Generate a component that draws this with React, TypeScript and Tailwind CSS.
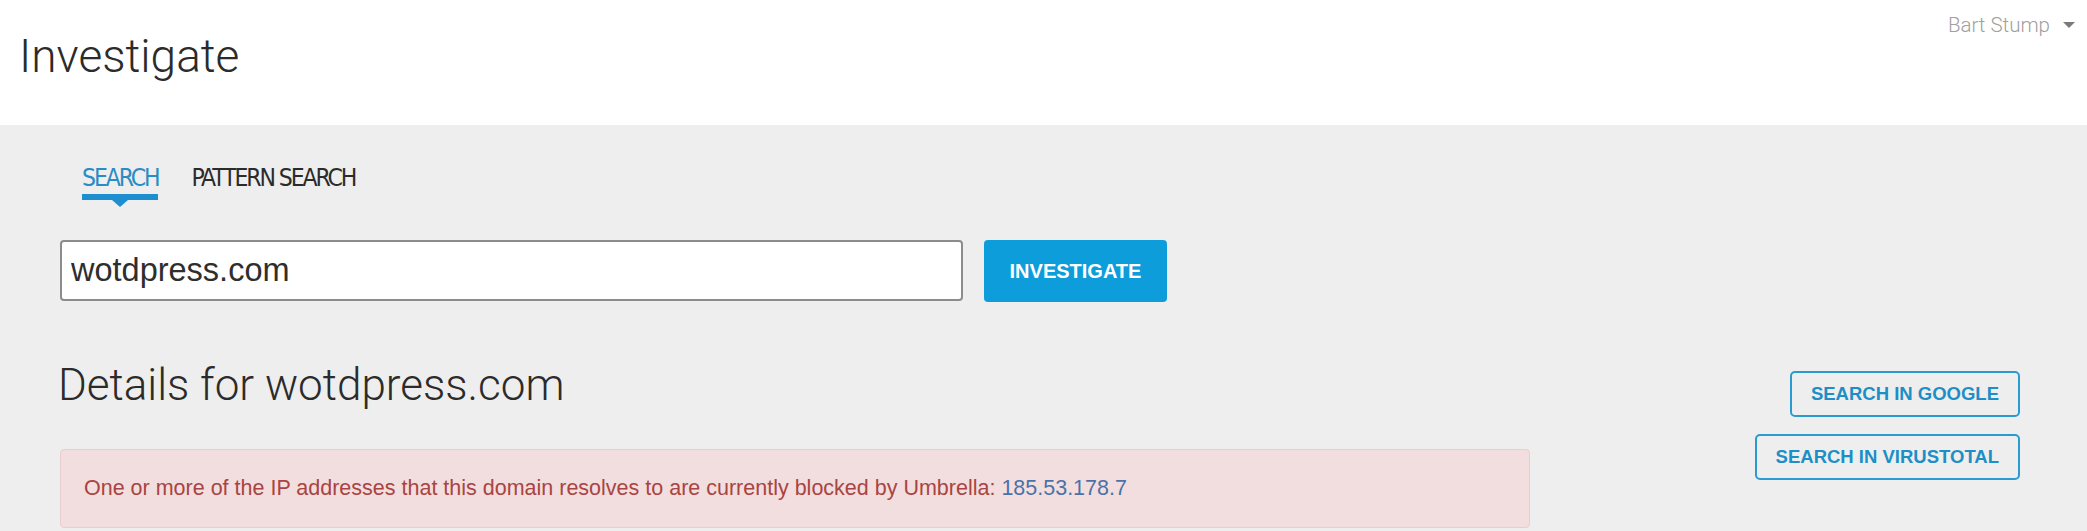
import { useState } from "react";

const tabs = ["SEARCH", "PATTERN SEARCH"];

function Tabs() {
  const [active, setActive] = useState(0);
  return (
    <div className="flex gap-[33px] pl-[22px] pt-[41px]">
      {tabs.map((tab, i) => (
        <button
          key={tab}
          onClick={() => setActive(i)}
          className={`relative pb-[9px] text-[24.5px] leading-none tracking-[-2.1px] font-['Liberation_Sans_Narrow','DejaVu_Sans_Condensed',sans-serif] ${
            i === active ? "text-[#2a8cc4]" : "text-[#2b2b2b]"
          }`}
        >
          {tab}
          {i === active && (
            <>
              <span className="absolute left-0 right-0 bottom-0 h-[6px] bg-[#1e8ed0]" />
              <span className="absolute left-1/2 -bottom-[7px] -translate-x-1/2 w-0 h-0 border-l-[8px] border-r-[8px] border-t-[7px] border-l-transparent border-r-transparent border-t-[#1e8ed0]" />
            </>
          )}
        </button>
      ))}
    </div>
  );
}

function OutlineButton({ label }: { label: string }) {
  return (
    <button className="h-[46px] px-[19px] rounded-[5px] border-2 border-[#2a9bd0] text-[#1d8fc6] text-[18.5px] font-bold font-['Liberation_Sans',Arial,sans-serif]">
      {label}
    </button>
  );
}

export default function App() {
  return (
    <div className="min-h-screen bg-[#eeeeee] font-['Roboto','Liberation_Sans',sans-serif]">
      <header className="h-[125px] bg-white flex justify-between items-start pl-[19px] pr-[12px]">
        <h1 className="pt-[33px] text-[46px] leading-none font-light text-[#2b2b2b]">Investigate</h1>
        <div className="pt-[15px] flex items-center gap-[13px] text-[20.5px] leading-none font-light text-[#a0a0a0]">
          <span>Bart Stump</span>
          <span className="w-0 h-0 border-l-[6px] border-r-[6px] border-t-[6px] border-l-transparent border-r-transparent border-t-[#7a7a7a]" />
        </div>
      </header>

      <main className="pl-[60px] pr-[67px]">
        <Tabs />

        <div className="flex gap-[21px] mt-[40px]">
          <input
            defaultValue="wotdpress.com"
            className="w-[903px] h-[61px] px-[9px] bg-white border-2 border-[#8c8c8c] rounded-[4px] text-[32.5px] text-[#2e2e2e] font-['Liberation_Sans',Arial,sans-serif] outline-none"
          />
          <button className="w-[183px] h-[62px] rounded-[4px] bg-[#0d9ddb] text-white text-[20px] font-bold font-['Liberation_Sans',Arial,sans-serif]">
            INVESTIGATE
          </button>
        </div>

        <div className="flex justify-between mt-[61px]">
          <div className="w-[1470px]">
            <h2 className="text-[44px] leading-none font-light text-[#2b2b2b] -ml-[2px]">Details for wotdpress.com</h2>
            <div className="mt-[42px] h-[79px] flex items-center px-[23px] bg-[#f2dede] border border-[#ebccd1] rounded-[4px] text-[21.5px] text-[#a94442] font-['Liberation_Sans',Arial,sans-serif]">
              <span>
                One or more of the IP addresses that this domain resolves to are currently blocked by Umbrella:{" "}
                <a className="text-[#4a72a8]">185.53.178.7</a>
              </span>
            </div>
          </div>
          <div className="flex flex-col items-end gap-[17px] pt-[8px]">
            <OutlineButton label="SEARCH IN GOOGLE" />
            <OutlineButton label="SEARCH IN VIRUSTOTAL" />
          </div>
        </div>
      </main>
    </div>
  );
}
